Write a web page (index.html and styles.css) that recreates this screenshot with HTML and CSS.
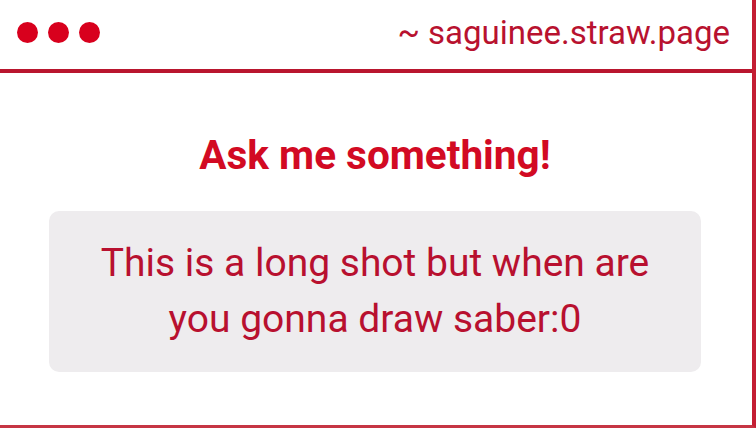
FILE: index.html
```html
<!DOCTYPE html>
<html>
<head>
<meta charset="utf-8">
<link rel="stylesheet" href="styles.css">
</head>
<body>
<div class="window">
  <div class="bar">
    <div class="dots">
      <span class="dot"></span>
      <span class="dot"></span>
      <span class="dot"></span>
    </div>
    <div class="url">~ saguinee.straw.page</div>
  </div>
  <div class="content">
    <h1 class="title">Ask me something!</h1>
    <div class="question">
      <p class="qtext">This is a long shot but when are you gonna draw saber:0</p>
    </div>
  </div>
</div>
</body>
</html>
```
FILE: styles.css
```css
html, body {
  margin: 0;
  padding: 0;
  background: #ffffff;
}
body {
  font-family: Roboto, "Liberation Sans", sans-serif;
  width: 756px;
  height: 428px;
  overflow: hidden;
}
.window {
  width: 756px;
  height: 428px;
  box-sizing: border-box;
  border-right: 4px solid #c41d33;
  border-bottom: 3px solid #c63544;
  display: flex;
  flex-direction: column;
}
.bar {
  height: 69px;
  border-bottom: 4px solid #b9162e;
  display: flex;
  align-items: center;
  justify-content: space-between;
  padding: 0 22px 0 17px;
}
.dots {
  display: flex;
  gap: 10px;
  margin-top: -5px;
}
.dot {
  width: 21px;
  height: 21px;
  border-radius: 50%;
  background: #d8001d;
}
.url {
  font-size: 33px;
  color: #b8122f;
  margin-top: -5px;
}
.content {
  flex: 1;
  display: flex;
  flex-direction: column;
  align-items: center;
  padding: 0 51px 0 49px;
}
.title {
  margin: 58px 0 0;
  font-size: 40.5px;
  font-weight: 700;
  color: #d20a23;
  line-height: 48px;
}
.question {
  align-self: stretch;
  margin-top: 32px;
  background: #eeecee;
  border-radius: 10px;
  height: 161px;
  display: flex;
  align-items: center;
  justify-content: center;
}
.qtext {
  margin: 0;
  text-align: center;
  font-size: 39px;
  line-height: 56px;
  color: #b8102f;
  padding: 0 40px 2px;
}
```
